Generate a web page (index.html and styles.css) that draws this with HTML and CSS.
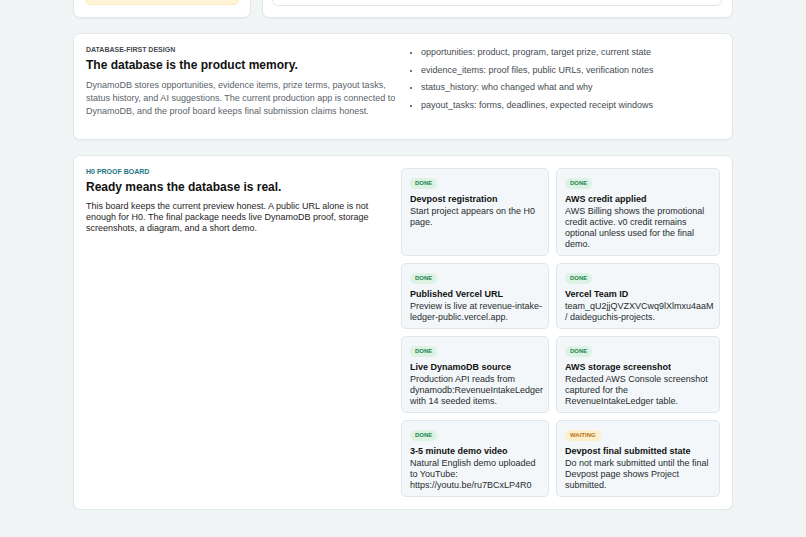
FILE: index.html
```html
<!DOCTYPE html>
<html lang="en">
<head>
<meta charset="utf-8">
<title>Revenue Intake Ledger</title>
<link rel="stylesheet" href="styles.css">
</head>
<body>
<main class="page">
  <div class="top-row">
    <section class="panel top-left">
      <div class="notice-bar"></div>
    </section>
    <section class="panel top-right">
      <div class="inner-box"></div>
    </section>
  </div>

  <section class="panel split">
    <div class="col">
      <p class="eyebrow">DATABASE-FIRST DESIGN</p>
      <h2 class="title">The database is the product memory.</h2>
      <p class="muted">DynamoDB stores opportunities, evidence items, prize terms, payout tasks, status history, and AI suggestions. The current production app is connected to DynamoDB, and the proof board keeps final submission claims honest.</p>
    </div>
    <ul class="table-list">
      <li>opportunities: product, program, target prize, current state</li>
      <li>evidence_items: proof files, public URLs, verification notes</li>
      <li>status_history: who changed what and why</li>
      <li>payout_tasks: forms, deadlines, expected receipt windows</li>
    </ul>
  </section>

  <section class="panel split board">
    <div class="col">
      <p class="eyebrow teal">H0 PROOF BOARD</p>
      <h2 class="title">Ready means the database is real.</h2>
      <p class="body">This board keeps the current preview honest. A public URL alone is not enough for H0. The final package needs live DynamoDB proof, storage screenshots, a diagram, and a short demo.</p>
    </div>
    <div class="cards">
      <article class="card">
        <span class="badge done">DONE</span>
        <h3>Devpost registration</h3>
        <p>Start project appears on the H0 page.</p>
      </article>
      <article class="card">
        <span class="badge done">DONE</span>
        <h3>AWS credit applied</h3>
        <p>AWS Billing shows the promotional credit active. v0 credit remains optional unless used for the final demo.</p>
      </article>
      <article class="card">
        <span class="badge done">DONE</span>
        <h3>Published Vercel URL</h3>
        <p>Preview is live at revenue-intake-ledger-public.vercel.app.</p>
      </article>
      <article class="card">
        <span class="badge done">DONE</span>
        <h3>Vercel Team ID</h3>
        <p>team_qU2jjQVZXVCwq9lXlmxu4aaM / daideguchis-projects.</p>
      </article>
      <article class="card">
        <span class="badge done">DONE</span>
        <h3>Live DynamoDB source</h3>
        <p>Production API reads from dynamodb:RevenueIntakeLedger with 14 seeded items.</p>
      </article>
      <article class="card">
        <span class="badge done">DONE</span>
        <h3>AWS storage screenshot</h3>
        <p>Redacted AWS Console screenshot captured for the RevenueIntakeLedger table.</p>
      </article>
      <article class="card">
        <span class="badge done">DONE</span>
        <h3>3-5 minute demo video</h3>
        <p>Natural English demo uploaded to YouTube: https://youtu.be/ru7BCxLP4R0</p>
      </article>
      <article class="card">
        <span class="badge waiting">WAITING</span>
        <h3>Devpost final submitted state</h3>
        <p>Do not mark submitted until the final Devpost page shows Project submitted.</p>
      </article>
    </div>
  </section>
</main>
</body>
</html>
```

FILE: styles.css
```css
* { box-sizing: border-box; }

html, body {
  margin: 0;
  padding: 0;
}

body {
  background: #f2f5f6;
  font-family: "Liberation Sans", Arial, sans-serif;
  color: #111;
  overflow: hidden;
}

.page {
  width: 660px;
  margin: 0 auto;
  display: flex;
  flex-direction: column;
  gap: 15px;
}

.panel {
  background: #fff;
  border: 1px solid #e1e7ea;
  border-radius: 7px;
  box-shadow: 0 1px 2px rgba(15, 23, 42, 0.04);
}

.top-row {
  display: grid;
  grid-template-columns: 178px 1fr;
  gap: 11px;
  margin-top: -60px;
}

.top-left {
  height: 78px;
  padding: 12px 11px 12px 11px;
  display: flex;
  flex-direction: column;
  justify-content: flex-end;
}

.notice-bar {
  height: 40px;
  background: #fff3d8;
  border: 1px solid #fdebc0;
  border-radius: 5px;
}

.top-right {
  height: 78px;
  padding: 10px 10px 11px 9px;
  display: flex;
  flex-direction: column;
  justify-content: flex-end;
}

.inner-box {
  height: 40px;
  background: #fff;
  border: 1px solid #e1e6ea;
  border-radius: 6px;
}

.split {
  display: grid;
  grid-template-columns: 311px minmax(0, 1fr);
  column-gap: 4px;
  padding: 12px;
  align-items: start;
}

.eyebrow {
  margin: 0 0 4px;
  font-size: 7px;
  line-height: 8px;
  font-weight: 700;
  color: #454b52;
}

.eyebrow.teal {
  color: #1d7583;
}

.title {
  margin: 0 0 7px;
  font-size: 12px;
  line-height: 14px;
  font-weight: 700;
  color: #111;
}

.muted {
  margin: 0 0 9px;
  font-size: 9px;
  line-height: 13px;
  color: #5a636b;
}

.body {
  margin: 0;
  font-size: 9px;
  line-height: 11px;
  color: #1f2326;
  max-width: 290px;
}

.table-list {
  margin: 0;
  padding: 0 0 0 20px;
  font-size: 9px;
  line-height: 12px;
  color: #444b52;
}

.table-list li {
  margin-bottom: 5.5px;
}

.table-list li::marker {
  font-size: 7px;
}

.board {
  padding-bottom: 12px;
}

.cards {
  display: grid;
  grid-template-columns: minmax(0, 148fr) minmax(0, 164fr);
  column-gap: 7px;
  row-gap: 7px;
}

.card {
  background: #f4f7f9;
  border: 1px solid #e0e6ea;
  border-radius: 5px;
  padding: 9px 4px 5px 8px;
}

.badge {
  display: block;
  width: fit-content;
  font-size: 6px;
  line-height: 7px;
  font-weight: 700;
  padding: 2px 5px;
  border-radius: 999px;
}

.badge.done {
  background: #dcf3e4;
  color: #23844f;
}

.badge.waiting {
  background: #fcefc9;
  color: #b4731a;
}

.card h3 {
  margin: 4px 0 1px;
  font-size: 9px;
  line-height: 12px;
  font-weight: 700;
  color: #111;
}

.card p {
  margin: 0;
  font-size: 9px;
  line-height: 11px;
  color: #272b2f;
}
```
